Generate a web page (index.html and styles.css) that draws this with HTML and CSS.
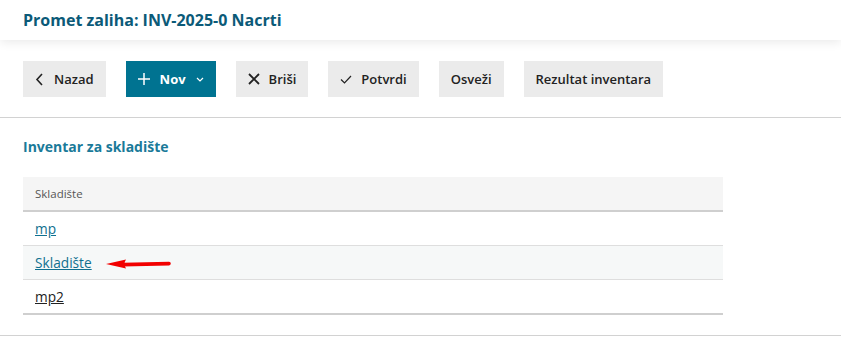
FILE: index.html
```html
<!DOCTYPE html>
<html lang="hr">
<head>
    <meta charset="UTF-8">
    <title>Promet zaliha</title>
    <link rel="stylesheet" href="styles.css">
</head>
<body>
    <div class="topbar">
        <h1>Promet zaliha: INV-2025-0 Nacrti</h1>
    </div>

    <div class="toolbar">
        <button class="btn btn-back">
            <svg width="9" height="13" viewBox="0 0 9 13"><path d="M7 1 L2 6.5 L7 12" fill="none" stroke="#222" stroke-width="1.6"/></svg>
            Nazad
        </button>
        <button class="btn btn-primary">
            <svg width="12" height="12" viewBox="0 0 12 12"><path d="M6 0 V12 M0 6 H12" fill="none" stroke="#fff" stroke-width="1.5"/></svg>
            Nov
            <svg class="caret" width="8" height="5" viewBox="0 0 8 5"><path d="M1 1 L4 4 L7 1" fill="none" stroke="#fff" stroke-width="1.2"/></svg>
        </button>
        <button class="btn">
            <svg width="12" height="12" viewBox="0 0 12 12"><path d="M1 1 L11 11 M11 1 L1 11" fill="none" stroke="#222" stroke-width="1.8"/></svg>
            Briši
        </button>
        <button class="btn">
            <svg width="12" height="9" viewBox="0 0 12 9"><path d="M1 4.5 L4.5 8 L11 1" fill="none" stroke="#222" stroke-width="1.2"/></svg>
            Potvrdi
        </button>
        <button class="btn">Osveži</button>
        <button class="btn">Rezultat inventara</button>
    </div>

    <div class="content">
        <h2>Inventar za skladište</h2>
        <table class="grid">
            <thead>
                <tr><th>Skladište</th></tr>
            </thead>
            <tbody>
                <tr><td><a href="#">mp</a></td></tr>
                <tr class="hover"><td>
                    <a href="#">Skladište</a>
                    <svg class="arrow" width="66" height="10" viewBox="0 0 66 10">
                        <path d="M0 5 L20 0.5 Q17 5 20 9.5 Z" fill="#f20000"/>
                        <path d="M17 5.6 L63 4.6" fill="none" stroke="#f20000" stroke-width="3.6" stroke-linecap="round"/>
                    </svg>
                </td></tr>
                <tr><td><a href="#" class="dark">mp2</a></td></tr>
            </tbody>
        </table>
    </div>
</body>
</html>
```

FILE: styles.css
```css
body {
    margin: 0;
    font-family: "Open Sans", "Noto Sans", sans-serif;
    color: #222;
    background: #fff;
}
.topbar {
    height: 40px;
    padding: 0 23px;
    display: flex;
    align-items: center;
    background: #fff;
    box-shadow: 0 2px 10px rgba(0, 0, 0, 0.09);
}
.topbar h1 {
    margin: 0;
    font-size: 16px;
    font-weight: 700;
    color: #0b5a78;
}
.toolbar {
    display: flex;
    gap: 20px;
    padding: 21px 23px 20px;
    border-bottom: 1px solid #d2d2d2;
}
.btn {
    height: 36px;
    padding: 0 12px;
    display: flex;
    align-items: center;
    gap: 9px;
    border: none;
    background: #ebebeb;
    font-family: inherit;
    font-size: 13px;
    font-weight: 600;
    color: #222;
    cursor: pointer;
}
.btn-back {
    gap: 10px;
}
.btn-primary {
    background: #007391;
    color: #fff;
    font-weight: 700;
    gap: 10px;
}
.content {
    padding: 19px 23px 20px;
    border-bottom: 1px solid #d2d2d2;
}
.content h2 {
    margin: 0 0 21px;
    font-size: 14px;
    font-weight: 700;
    color: #1a7a99;
}
.grid {
    width: 700px;
    border-collapse: collapse;
    border-bottom: 2px solid #cfcfcf;
}
.grid th {
    height: 33px;
    padding: 0 12px;
    text-align: left;
    font-size: 11.5px;
    font-weight: 400;
    color: #555;
    background: #f5f5f5;
    border-bottom: 2px solid #cfcfcf;
}
.grid td {
    height: 33px;
    padding: 0 12px;
    font-size: 13.7px;
    border-top: 1px solid #dedede;
}
.grid tbody tr:first-child td {
    border-top: none;
}
.grid tr.hover td {
    background: #f6f8f8;
}
.grid a {
    color: #10708f;
}
.grid a.dark {
    color: #222;
}
.arrow {
    vertical-align: middle;
    margin-left: 11px;
}
```
